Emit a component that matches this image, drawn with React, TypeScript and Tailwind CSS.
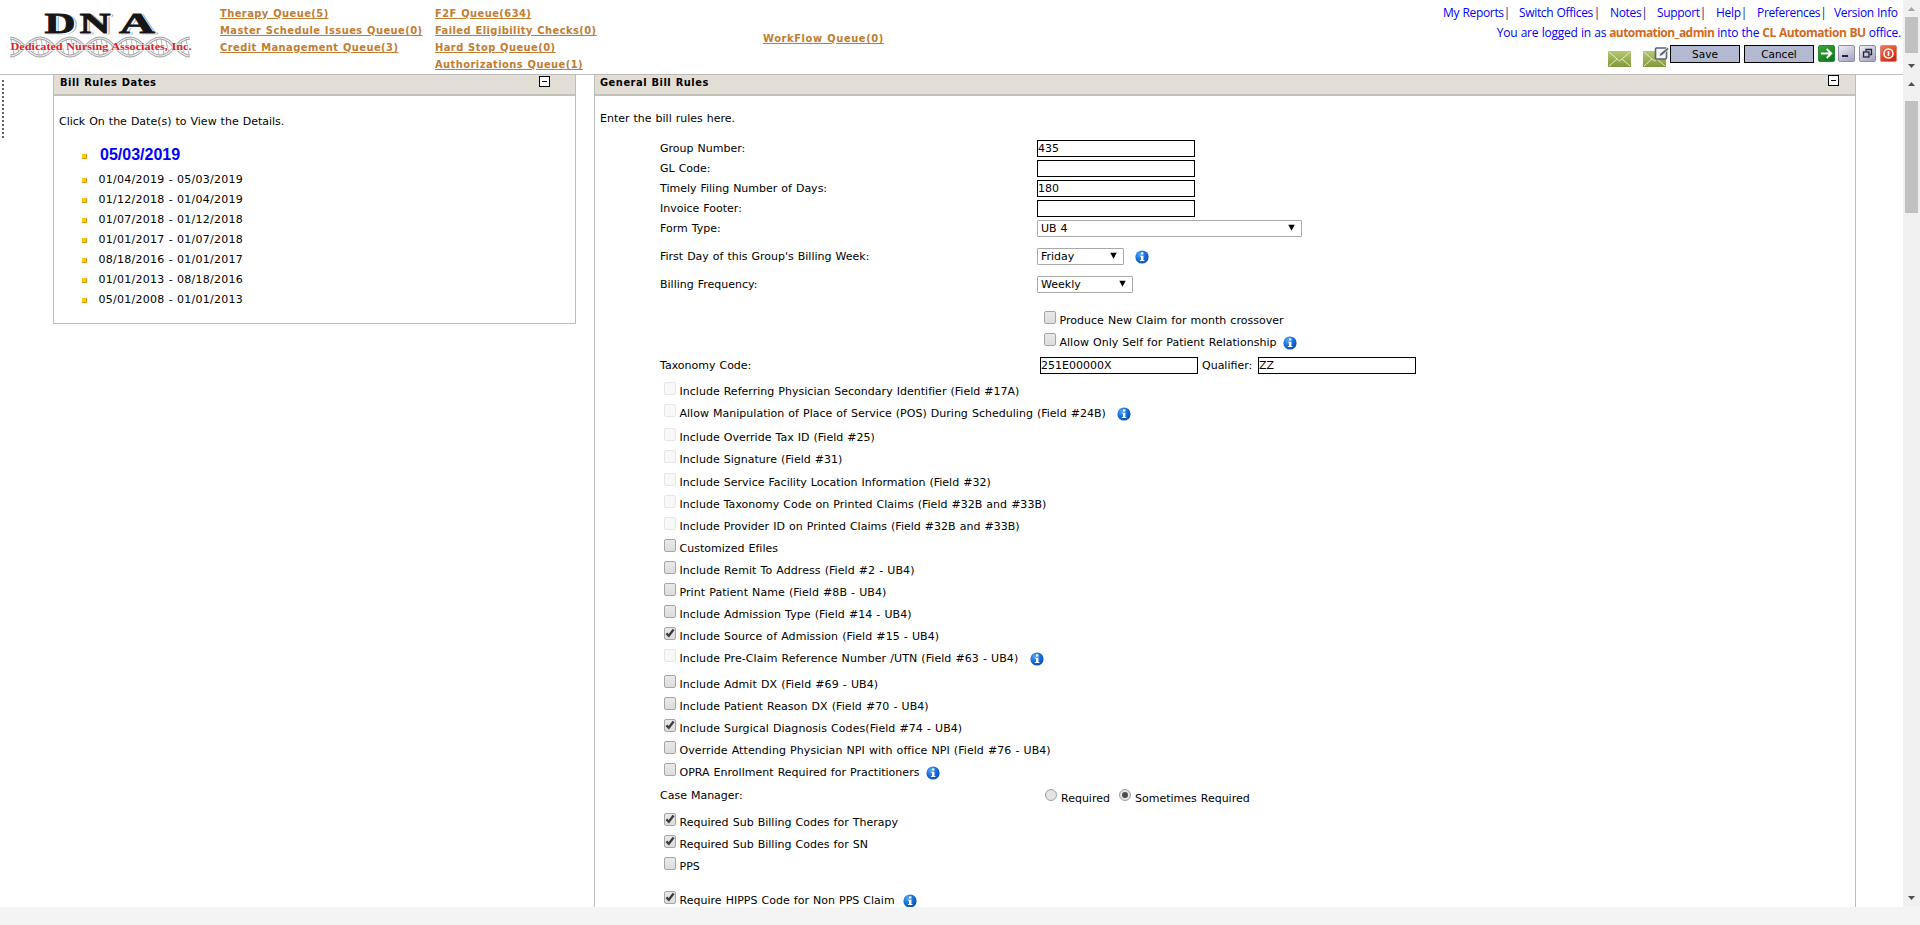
import React from "react";

type Option = {
  text: string;
  state?: "off" | "on" | "disabled";
  info?: string;
  gap?: string;
};

const options: Option[] = [
  { text: "Include Referring Physician Secondary Identifier (Field #17A)", state: "disabled" },
  { text: "Allow Manipulation of Place of Service (POS) During Scheduling (Field #24B)", state: "disabled", info: "ml-[11px]" },
  { text: "Include Override Tax ID (Field #25)", state: "disabled", gap: "mt-0.5" },
  { text: "Include Signature (Field #31)", state: "disabled" },
  { text: "Include Service Facility Location Information (Field #32)", state: "disabled", gap: "mt-px" },
  { text: "Include Taxonomy Code on Printed Claims (Field #32B and #33B)", state: "disabled" },
  { text: "Include Provider ID on Printed Claims (Field #32B and #33B)", state: "disabled" },
  { text: "Customized Efiles" },
  { text: "Include Remit To Address (Field #2 - UB4)" },
  { text: "Print Patient Name (Field #8B - UB4)" },
  { text: "Include Admission Type (Field #14 - UB4)" },
  { text: "Include Source of Admission (Field #15 - UB4)", state: "on" },
  { text: "Include Pre-Claim Reference Number /UTN (Field #63 - UB4)", state: "disabled", info: "ml-3" },
  { text: "Include Admit DX (Field #69 - UB4)", gap: "mt-1" },
  { text: "Include Patient Reason DX (Field #70 - UB4)" },
  { text: "Include Surgical Diagnosis Codes(Field #74 - UB4)", state: "on" },
  { text: "Override Attending Physician NPI with office NPI (Field #76 - UB4)" },
  { text: "OPRA Enrollment Required for Practitioners", info: "ml-[7px]" },
];

const lastOptions: Option[] = [
  { text: "Required Sub Billing Codes for Therapy", state: "on" },
  { text: "Required Sub Billing Codes for SN", state: "on" },
  { text: "PPS" },
  { text: "Require HIPPS Code for Non PPS Claim", state: "on", info: "ml-2", gap: "mt-3" },
];

const dates = [
  "01/04/2019 - 05/03/2019",
  "01/12/2018 - 01/04/2019",
  "01/07/2018 - 01/12/2018",
  "01/01/2017 - 01/07/2018",
  "08/18/2016 - 01/01/2017",
  "01/01/2013 - 08/18/2016",
  "05/01/2008 - 01/01/2013",
];

function Info({ className = "" }: { className?: string }) {
  return (
    <svg viewBox="0 0 14 14" className={"h-3.5 w-3.5 shrink-0 " + className}>
      <defs>
        <radialGradient id="info" cx="0.35" cy="0.3" r="0.8">
          <stop offset="0" stopColor="#5aa9f2" />
          <stop offset="0.5" stopColor="#1670dc" />
          <stop offset="1" stopColor="#0b4aa6" />
        </radialGradient>
      </defs>
      <circle cx="7" cy="7" r="6.6" fill="url(#info)" />
      <rect x="6" y="2.4" width="2.4" height="2.1" fill="#fff" />
      <path d="M5 5.7h3.4v4.4h1V11H4.9v-.9H6V6.6H5z" fill="#fff" />
    </svg>
  );
}

function Check({ state = "off" }: { state?: Option["state"] }) {
  return (
    <span
      className={
        "flex h-[13px] w-3 shrink-0 items-center justify-center rounded-[2px] border " +
        (state === "disabled" ? "border-[#e6e6e6] bg-[#f8f8f8]" : "border-[#a6a6a6] bg-linear-to-b from-[#e9e9e9] to-[#dcdcdc]")
      }
    >
      {state === "on" && (
        <svg viewBox="0 0 10 10" className="h-2.5 w-2.5 shrink-0">
          <path d="M1.4 5.4 3.8 7.800 8.600 1.500" fill="none" stroke="#3c3c3c" strokeWidth="2.300" />
        </svg>
      )}
    </span>
  );
}

function OptionRow({ o }: { o: Option }) {
  const track = o.text.includes(" - UB4") ? "tracking-[0.07px]" : "tracking-[0.02px]";
  return (
    <div className={"flex h-[22px] items-center pl-[5px] " + (o.gap ?? "")}>
      <span className="mb-1.5">
        <Check state={o.state} />
      </span>
      <span className={"ml-[3.5px] " + track}>{o.text}</span>
      {o.info && <Info className={"mt-0.5 " + o.info} />}
    </div>
  );
}

function Field({ value = "" }: { value?: string }) {
  return <div className="flex h-[17px] w-[158px] items-center border border-black leading-[15px]">{value}</div>;
}

function Select({ value, width }: { value: string; width: string }) {
  return (
    <div className={"flex h-[17px] items-center justify-between rounded-[1px] border border-[#a9a9a9] pr-1.5 pl-[3px] leading-[15px] " + width}>
      <span>{value}</span>
      <svg viewBox="0 0 7 7" className="mb-0.5 h-[7px] w-[7px]">
        <path d="M.3.8h6.400L3.500 6.800z" fill="#000" />
      </svg>
    </div>
  );
}

function Row({ label, h, children }: { label: string; h: string; children?: React.ReactNode }) {
  return (
    <div className={"flex items-center " + h}>
      <span className="w-[378px] pl-px">{label}</span>
      {children}
    </div>
  );
}

function Minus() {
  return (
    <span className="flex h-[11px] w-[11px] items-center justify-center border border-black bg-white">
      <span className="h-px w-[5px] bg-black" />
    </span>
  );
}

function Radio({ on = false }: { on?: boolean }) {
  return (
    <span className="mb-[7px] flex h-3 w-3 items-center justify-center rounded-full border border-[#a0a0a0] bg-[#e4e4e4]">
      {on && <span className="h-1.5 w-1.5 rounded-full bg-[#4c4c4c]" />}
    </span>
  );
}

function Logo() {
  const strand = (flip: number) =>
    "M10 " + (47 + 9 * flip) + [0, 1, 2].map((i) => {
      const x = 10 + i * 60;
      return ` C${x + 12} ${47 + 9 * flip} ${x + 18} ${47 - 9 * flip} ${x + 30} ${47 - 9 * flip} S${x + 48} ${47 + 9 * flip} ${x + 60} ${47 + 9 * flip}`;
    }).join("");
  const rungs = Array.from({ length: 36 }, (_, i) => {
    const x = 12 + i * 5;
    const a = Math.abs(Math.cos(((x - 10) / 30) * Math.PI)) * 8;
    return `M${x - 1} ${47 - a}L${x + 2} ${47 + a}`;
  }).join("");
  return (
    <svg viewBox="0 0 210 70" className="h-[70px] w-[210px] shrink-0">
      <path d={rungs} stroke="#b4b4b4" strokeWidth="1" fill="none" />
      <path d={strand(1)} stroke="#a2a2a2" strokeWidth="3" fill="none" />
      <path d={strand(-1)} stroke="#a2a2a2" strokeWidth="3" fill="none" />
      <path d={strand(1)} stroke="#ededed" strokeWidth="1.2" fill="none" />
      <path d={strand(-1)} stroke="#ededed" strokeWidth="1.2" fill="none" />
      <g fontFamily="Liberation Serif, serif" fontWeight="700">
        <g fontSize="30">
          <g fill="#9a9a9a" stroke="#9a9a9a" strokeWidth=".8">
            <text x="47" y="34" textLength="31" lengthAdjust="spacingAndGlyphs">D</text>
            <text x="82" y="34" textLength="31" lengthAdjust="spacingAndGlyphs">N</text>
            <text x="121.500" y="34" textLength="36" lengthAdjust="spacingAndGlyphs">A</text>
          </g>
          <g fill="#fff" stroke="#fff" strokeWidth=".8">
            <text x="46" y="33.500" textLength="31" lengthAdjust="spacingAndGlyphs">D</text>
            <text x="81" y="33.500" textLength="31" lengthAdjust="spacingAndGlyphs">N</text>
            <text x="120.500" y="33.500" textLength="36" lengthAdjust="spacingAndGlyphs">A</text>
          </g>
          <g fill="#161616" stroke="#161616" strokeWidth=".8">
            <text x="44.500" y="33" textLength="31" lengthAdjust="spacingAndGlyphs">D</text>
            <text x="79.500" y="33" textLength="31" lengthAdjust="spacingAndGlyphs">N</text>
            <text x="119" y="33" textLength="36" lengthAdjust="spacingAndGlyphs">A</text>
          </g>
        </g>
        <text x="10.500" y="49.500" fontSize="10" fill="#e01f26" stroke="#fff" strokeWidth="1.500" strokeOpacity="0.6" paintOrder="stroke" textLength="181" lengthAdjust="spacingAndGlyphs">Dedicated Nursing Associates, Inc.</text>
      </g>
    </svg>
  );
}

function Mail({ edit = false }: { edit?: boolean }) {
  return (
    <svg viewBox="0 0 27 21" className="h-[21px] w-[27px]">
      <defs>
        <linearGradient id="mail" x1="0" y1="0" x2="0" y2="1">
          <stop offset="0" stopColor="#b5c871" />
          <stop offset="1" stopColor="#82983a" />
        </linearGradient>
      </defs>
      <rect x="0" y="4" width="23" height="16" fill="url(#mail)" />
      <path d="M1 5l10.500 9L22 5M1 19l8-7M22 19l-8-7" stroke="#e4edc4" strokeWidth="1" fill="none" />
      {edit && (
        <>
          <rect x="12.500" y="1" width="11" height="11" rx="1" fill="#f4f6fa" stroke="#5b636e" strokeWidth="1.600" />
          <path d="M16 9.500l1-3L24.500.5 26 2 19 8.500z" fill="#5b636e" stroke="#fff" strokeWidth=".7" />
        </>
      )}
    </svg>
  );
}

function ToolIcon({ kind, className = "" }: { kind: "go" | "min" | "restore" | "power"; className?: string }) {
  const top = { go: "#3fa53f", min: "#f1f1f8", restore: "#f1f1f8", power: "#f47a5c" }[kind];
  const bottom = { go: "#0f7a18", min: "#a9a9c6", restore: "#a9a9c6", power: "#cf2a10" }[kind];
  const edge = { go: "#2b8a36", min: "#8e8ea6", restore: "#8e8ea6", power: "#dd8473" }[kind];
  return (
    <svg viewBox="0 0 17 17" className={"h-[17px] w-[17px] shrink-0 " + className}>
      <defs>
        <linearGradient id={"tool-" + kind} x1="0" y1="0" x2="0.6" y2="1">
          <stop offset="0" stopColor={top} />
          <stop offset="1" stopColor={bottom} />
        </linearGradient>
      </defs>
      <rect x=".5" y=".5" width="16" height="16" rx="1.500" fill={`url(#tool-${kind})`} stroke={edge} />
      {kind === "go" && <path d="M3 8.500h10M8.700 4l4.500 4.500L8.700 13" stroke="#fff" strokeWidth="2" fill="none" />}
      {kind === "min" && <rect x="4" y="10" width="6" height="2" fill="#23233a" />}
      {kind === "restore" && (
        <g fill="none" stroke="#23233a">
          <path d="M7 6.500V4.500h5.500v5H11" strokeWidth="1.300" />
          <rect x="4.500" y="7" width="5.500" height="5" strokeWidth="1.300" />
        </g>
      )}
      {kind === "power" && (
        <g stroke="#fff" fill="none">
          <circle cx="8.500" cy="8.500" r="4.500" strokeWidth="1.500" />
          <path d="M8.500 6v5" strokeWidth="1.700" />
        </g>
      )}
    </svg>
  );
}

function Arrow({ up = false, color = "#505050" }: { up?: boolean; color?: string }) {
  return (
    <svg viewBox="0 0 7 4" className="h-1 w-[7px]">
      <path d={up ? "M0 4h7L3.500 0z" : "M0 0h7L3.500 4z"} fill={color} />
    </svg>
  );
}

function Queue({ children }: { children: string }) {
  return <a className="block h-[17px] leading-[17px] whitespace-nowrap text-[#c17d32] underline">{children}</a>;
}

const links: [string, string][] = [
  ["My Reports", "w-[76px]"],
  ["Switch Offices", "w-[91px]"],
  ["Notes", "w-[47px]"],
  ["Support", "w-[59px]"],
  ["Help", "w-[41px]"],
  ["Preferences", "w-[77px]"],
  ["Version Info", "w-[67px]"],
];

export default function App() {
  return (
    <div className="flex h-[925px] w-[1920px] flex-col overflow-hidden bg-[#f4f4f4] font-['DejaVu_Sans',sans-serif] text-[11px] leading-[15px] whitespace-nowrap text-black [word-spacing:0.5px]">
      <div className="flex h-[75px] shrink-0 bg-white">
        <header className="flex w-[1903px] border-b border-[#bdbdbd]">
          <Logo />
          <nav className="ml-2.5 flex pt-[5px] font-['DejaVu_Sans_Condensed','Open_Sans',sans-serif] text-[11px] font-bold tracking-[0.45px]">
            <div className="w-[215px]">
              <Queue>Therapy Queue(5)</Queue>
              <Queue>Master Schedule Issues Queue(0)</Queue>
              <Queue>Credit Management Queue(3)</Queue>
            </div>
            <div className="w-[328px]">
              <Queue>F2F Queue(634)</Queue>
              <Queue>Failed Eligibility Checks(0)</Queue>
              <Queue>Hard Stop Queue(0)</Queue>
              <Queue>Authorizations Queue(1)</Queue>
            </div>
            <div className="pt-[25px] tracking-[0.6px]">
              <Queue>WorkFlow Queue(0)</Queue>
            </div>
          </nav>
          <div className="ml-auto flex flex-col items-end font-['Open_Sans',sans-serif] text-[12px] text-[#0000ff]">
            <div className="flex h-6 items-center pr-0.5 tracking-[-0.33px]">
              {links.map(([l, w], i) => (
                <span key={l} className={"flex " + w}>
                  {l}
                  {i < links.length - 1 && <span className="ml-auto pr-2.5 text-[#20206a]">|</span>}
                </span>
              ))}
            </div>
            <div className="flex h-4 items-center gap-[3px] pr-0.5 tracking-[-0.24px]">
              <span>You are logged in as</span>
              <b className="tracking-[-0.56px] text-[#d2691e]">automation_admin</b>
              <span>into the</span>
              <b className="tracking-[-0.46px] text-[#d2691e]">CL Automation BU</b>
              <span>office.</span>
            </div>
            <div className="flex items-start pt-[5px] pr-1.5 font-['DejaVu_Sans',sans-serif] text-[10.5px] text-black">
              <div className="mt-0.5 flex gap-2">
                <Mail />
                <Mail edit />
              </div>
              <div className="flex h-[18px] w-[70px] items-center justify-center border border-black bg-[#b3b9d1]">Save</div>
              <div className="ml-1 flex h-[18px] w-[70px] items-center justify-center border border-black bg-[#b3b9d1]">Cancel</div>
              <ToolIcon kind="go" className="ml-1" />
              <ToolIcon kind="min" className="ml-[3px]" />
              <ToolIcon kind="restore" className="ml-1" />
              <ToolIcon kind="power" className="ml-1" />
            </div>
          </div>
        </header>
        <div className="flex w-[17px] flex-col items-center bg-[#f0f0f0] pt-[7px]">
          <Arrow up color="#a3a3a3" />
          <div className="mt-1.5 h-9 w-[13px] bg-[#c1c1c1]" />
          <div className="mt-[11px] flex"><Arrow /></div>
        </div>
      </div>

      <div className="flex h-[832px] shrink-0 overflow-hidden bg-white">
        <div className="w-[53px] pt-[5px] pl-0.5">
          <div className="h-[60px] w-0.5 bg-[repeating-linear-gradient(to_bottom,#666_0px,#666_2px,#fff_2px,#fff_4px)]" />
        </div>
        <section className="h-[249px] w-[523px] border-x border-b border-[#bdbdbd]">
          <div className="flex h-[21px] items-start justify-between border-b-2 border-[#c3bfb9] bg-[#e2ded6] pr-[25px] pl-1.5">
            <h2 className="font-['DejaVu_Sans_Condensed','Open_Sans',sans-serif] leading-[15px] font-bold tracking-[0.5px]">Bill Rules Dates</h2>
            <span className="pt-px"><Minus /></span>
          </div>
          <p className="mt-[18px] pl-[5px]">Click On the Date(s) to View the Details.</p>
          <ul className="mt-[15px] pl-7">
            <li className="flex h-[22px] items-center font-['Liberation_Sans',sans-serif] text-base font-bold text-[#0000ff]">
              <span className="mt-[3px] mr-[13px] h-[5px] w-[5px] border-r border-b border-[#d09a18] bg-[#ffc800]" />
              05/03/2019
            </li>
            <li className="h-[3px]" />
            {dates.map((d) => (
              <li key={d} className="flex h-5 items-center tracking-[0.25px]">
                <span className="mt-[3px] mr-[11.5px] h-[5px] w-[5px] border-r border-b border-[#d09a18] bg-[#ffc800]" />
                {d}
              </li>
            ))}
          </ul>
        </section>
        <section className="ml-[18px] w-[1262px] border-x border-[#bdbdbd]">
          <div className="flex h-[21px] items-start justify-between border-b-2 border-[#c3bfb9] bg-[#e2ded6] pr-4 pl-[5px]">
            <h2 className="font-['DejaVu_Sans_Condensed','Open_Sans',sans-serif] leading-[15px] font-bold tracking-[0.5px]">General Bill Rules</h2>
            <Minus />
          </div>
          <p className="mt-[15px] pl-[5px]">Enter the bill rules here.</p>
          <div className="mt-3 pl-16">
            <Row label="Group Number:" h="h-5"><Field value="435" /></Row>
            <Row label="GL Code:" h="h-5"><Field /></Row>
            <Row label="Timely Filing Number of Days:" h="h-5"><Field value="180" /></Row>
            <Row label="Invoice Footer:" h="h-5"><Field /></Row>
            <Row label="Form Type:" h="h-5"><Select value="UB 4" width="w-[265px]" /></Row>
            <Row label="First Day of this Group's Billing Week:" h="h-9">
              <Select value="Friday" width="w-[87px]" />
              <Info className="mt-0.5 ml-[11px]" />
            </Row>
            <Row label="Billing Frequency:" h="h-5"><Select value="Weekly" width="w-24" /></Row>
            <div className="mt-[15px] pl-[380px]">
              <OptionRow o={{ text: "Produce New Claim for month crossover" }} />
              <OptionRow o={{ text: "Allow Only Self for Patient Relationship", info: "ml-[7px]" }} />
            </div>
            <Row label="Taxonomy Code:" h="h-6">
              <span className="ml-[3px]"><Field value="251E00000X" /></span>
              <span className="ml-1 w-14">Qualifier:</span>
              <Field value="ZZ" />
            </Row>
            <div className="mt-[3px]">
              {options.map((o) => <OptionRow key={o.text} o={o} />)}
            </div>
            <Row label="Case Manager:" h="h-6">
              <span className="flex items-center pt-1.5 pl-2">
                <Radio />
                <span className="ml-1">Required</span>
                <span className="ml-[9px]"><Radio on /></span>
                <span className="ml-1">Sometimes Required</span>
              </span>
            </Row>
            <div className="mt-1">
              {lastOptions.map((o) => <OptionRow key={o.text} o={o} />)}
            </div>
          </div>
        </section>
        <div className="ml-auto flex w-[17px] flex-col items-center bg-[#f0f0f0] pt-[7px]">
          <Arrow up />
          <div className="mt-[15px] h-28 w-[13px] bg-[#c1c1c1]" />
          <div className="mt-auto flex pb-[7px]"><Arrow /></div>
        </div>
      </div>
    </div>
  );
}
